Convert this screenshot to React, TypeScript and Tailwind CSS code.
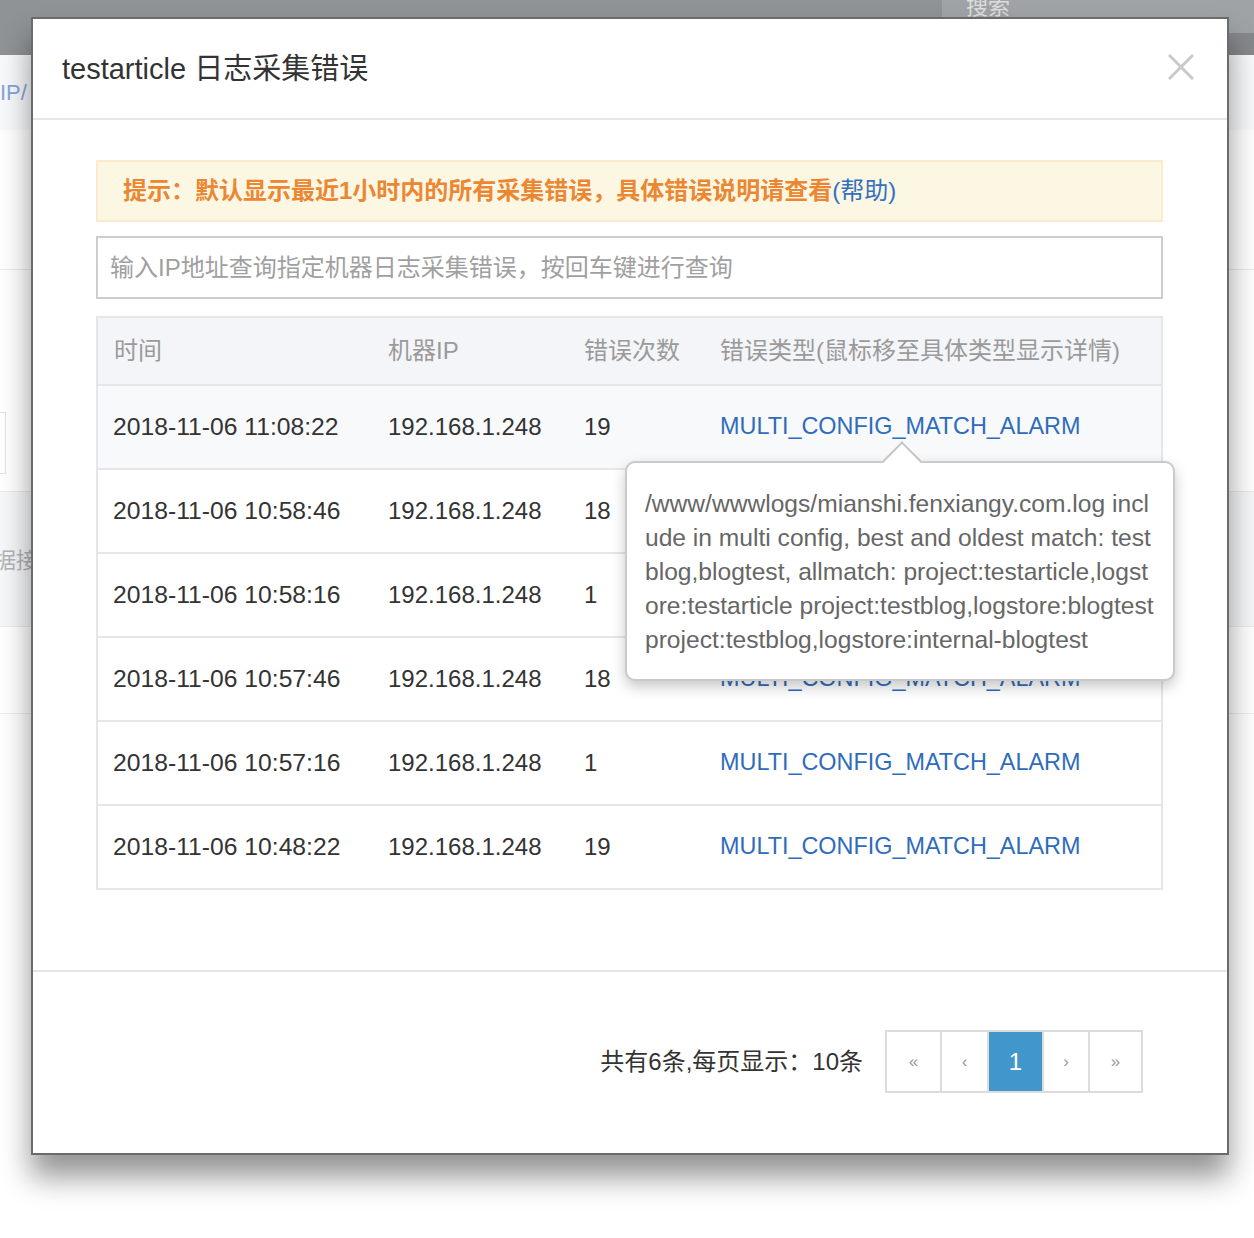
const rows = [
  { time: '2018-11-06 11:08:22', ip: '192.168.1.248', count: '19' },
  { time: '2018-11-06 10:58:46', ip: '192.168.1.248', count: '18' },
  { time: '2018-11-06 10:58:16', ip: '192.168.1.248', count: '1' },
  { time: '2018-11-06 10:57:46', ip: '192.168.1.248', count: '18' },
  { time: '2018-11-06 10:57:16', ip: '192.168.1.248', count: '1' },
  { time: '2018-11-06 10:48:22', ip: '192.168.1.248', count: '19' },
];

const tipLines = [
  '/www/wwwlogs/mianshi.fenxiangy.com.log incl',
  'ude in multi config, best and oldest match: test',
  'blog,blogtest, allmatch: project:testarticle,logst',
  'ore:testarticle project:testblog,logstore:blogtest',
  'project:testblog,logstore:internal-blogtest',
];

const pages = [
  { label: '«', w: 'w-[53px]', active: false },
  { label: '‹', w: 'w-[47px]', active: false },
  { label: '1', w: 'w-[55px]', active: true },
  { label: '›', w: 'w-[46px]', active: false },
  { label: '»', w: 'w-[53px]', active: false },
];

const App = () => {
  return (
    <div className="relative w-[1254px] h-[1238px] overflow-hidden bg-white font-['Liberation_Sans','Noto_Sans_CJK_SC',sans-serif]">
      {/* page behind the dialog */}
      <div className="flex h-[55px] bg-[#8f9396]">
        <div className="flex-1" />
        <div className="flex flex-col w-[312px]">
          <div className="h-[33px] bg-[#a0a3a5] pl-[24px] text-[22px] leading-[14px] text-[#dcdddd] overflow-hidden">
            搜索
          </div>
          <div className="flex-1 bg-[#86898c]" />
        </div>
      </div>
      <div className="h-[75px] bg-[#f8f9fb] pt-[24px] text-[22px] leading-[28px] text-[#86a5d9]">IP/</div>
      <div className="h-[140px] border-b border-[#ececee]" />
      <div className="h-[222px] border-b border-[#ececee] pt-[142px]">
        <div className="h-[62px] w-[6px] border border-l-0 border-[#e2e2e2]" />
      </div>
      <div className="h-[135px] bg-[#f6f7f9] border-b border-[#ececee] pt-[52px] text-[22px] text-[#b3b3b3]">
        <span className="-ml-[6px]">据接</span>
      </div>
      <div className="h-[87px] border-b border-[#ececee]" />

      {/* dialog */}
      <div className="absolute left-[31px] top-[17px] w-[1198px] h-[1138px] flex flex-col bg-white border-2 border-[#6b6b6b] shadow-[0_22px_28px_rgba(0,0,0,0.42)]">
        <div className="flex items-center justify-between h-[101px] pl-[29px] pr-[33px] pt-[1px] border-b-2 border-[#e6e6e6]">
          <h3 className="text-[29px] text-[#333] leading-none">
            <span className="font-medium">testarticle</span> 日志采集错误
          </h3>
          <svg width="26" height="26" viewBox="0 0 26 26" className="mb-[4px]">
            <path d="M1 1L25 25M25 1L1 25" stroke="#c9c9c9" strokeWidth="3" />
          </svg>
        </div>

        <div className="flex-1 pt-[40px] pl-[63px] pr-[64px]">
          <div className="h-[62px] flex items-center pl-[25px] bg-[#fcf7e3] border-2 border-[#faebcc] text-[24px] font-bold text-[#eb8733]">
            提示：默认显示最近1小时内的所有采集错误，具体错误说明请查看
            <span className="font-normal text-[#3470c0]">(帮助)</span>
          </div>

          <div className="mt-[14px] h-[63px] flex items-center pl-[12px] border-2 border-[#cdcdcd] text-[24px] text-[#a0a0a0]">
            输入IP地址查询指定机器日志采集错误，按回车键进行查询
          </div>

          <div className="relative mt-[17px]">
            <table className="w-full border-collapse border-2 border-[#e4e6ea] text-[24px]">
              <thead>
                <tr className="h-[68px] bg-[#f4f5f8] text-[#9a9a9a] text-left">
                  <th className="w-[274px] pl-[16px] font-normal">时间</th>
                  <th className="w-[196px] pl-[17px] font-normal">机器IP</th>
                  <th className="w-[136px] pl-[17px] font-normal">错误次数</th>
                  <th className="pl-[17px] font-normal">错误类型(鼠标移至具体类型显示详情)</th>
                </tr>
              </thead>
              <tbody>
                {rows.map((r, i) => (
                  <tr
                    key={i}
                    className={`h-[84px] border-t-2 border-[#e4e6ea] text-[#333] ${i === 0 ? 'bg-[#f8f9fb]' : 'bg-white'}`}
                  >
                    <td className="pl-[15px] text-[24.7px]">{r.time}</td>
                    <td className="pl-[17px]">{r.ip}</td>
                    <td className="pl-[17px]">{r.count}</td>
                    <td className="pl-[17px] text-[23.4px] text-[#2f6cbb]">MULTI_CONFIG_MATCH_ALARM</td>
                  </tr>
                ))}
              </tbody>
            </table>

            {/* tooltip */}
            <div className="absolute left-[529px] top-[145px] w-[550px] h-[220px] bg-white border-2 border-[#cacaca] rounded-[10px] shadow-[0_6px_14px_rgba(0,0,0,0.22)] pt-[24px] pl-[18px] text-[24.6px] leading-[34px] text-[#666] whitespace-nowrap">
              <div className="absolute left-[261px] -top-[16px] w-[28px] h-[28px] rotate-45 bg-white border-l-2 border-t-2 border-[#c4c4c4]" />
              {tipLines.map((l) => (
                <div key={l} className="relative">{l}</div>
              ))}
            </div>
          </div>
        </div>

        <div className="h-[183px] border-t-2 border-[#e6e6e6] flex justify-end items-start pt-[58px] pr-[84px]">
          <div className="h-[63px] flex items-center mr-[22px] text-[24px] text-[#333]">共有6条,每页显示：10条</div>
          <div className="flex h-[63px] border-2 border-[#dcdcdc]">
            {pages.map((p, i) => (
              <div
                key={i}
                className={`${p.w} flex items-center justify-center ${i > 0 ? 'border-l-2 border-[#dcdcdc]' : ''} ${
                  p.active ? 'bg-[#4197c9] text-white text-[24px] border-[#4197c9]' : 'text-[#9a9a9a] text-[17px]'
                }`}
              >
                {p.label}
              </div>
            ))}
          </div>
        </div>
      </div>
    </div>
  );
};

export default App;
